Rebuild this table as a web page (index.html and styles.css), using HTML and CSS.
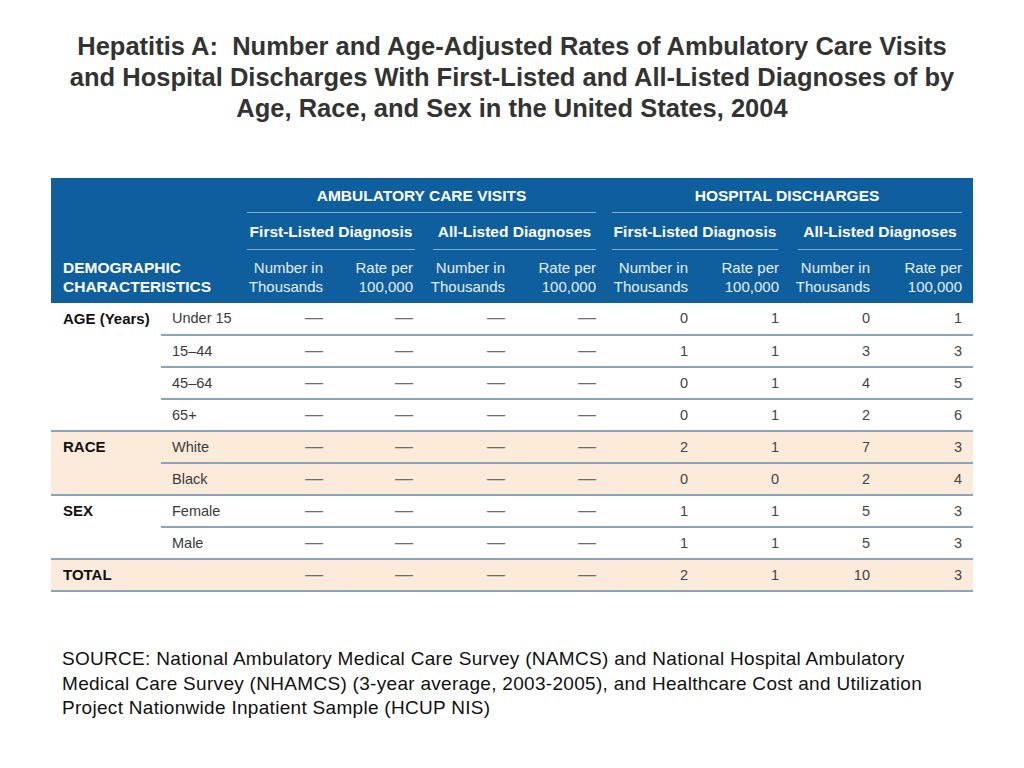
FILE: index.html
```html
<!DOCTYPE html>
<html lang="en">
<head>
<meta charset="utf-8">
<title>Hepatitis A</title>
<link rel="stylesheet" href="styles.css">
</head>
<body>
<h1 class="title">Hepatitis A:&nbsp; Number and Age-Adjusted Rates of Ambulatory Care Visits<br>and Hospital Discharges With First-Listed and All-Listed Diagnoses of by<br>Age, Race, and Sex in the United States, 2004</h1>

<table class="data">
  <colgroup>
    <col class="w110"><col class="w84"><col class="w80"><col class="w90"><col class="w92"><col class="w91"><col class="w92"><col class="w91"><col class="w91"><col class="w101">
  </colgroup>
  <thead>
    <tr class="h-group">
      <th colspan="2" rowspan="2" class="blank"></th>
      <th colspan="4" class="grp grp-a"><div class="rule">AMBULATORY CARE VISITS</div></th>
      <th colspan="4" class="grp grp-h"><div class="rule">HOSPITAL DISCHARGES</div></th>
    </tr>
    <tr class="h-sub">
      <th colspan="2" class="sub"><div class="rule s1">First-Listed Diagnosis</div></th>
      <th colspan="2" class="sub"><div class="rule s2">All-Listed Diagnoses</div></th>
      <th colspan="2" class="sub"><div class="rule s3">First-Listed Diagnosis</div></th>
      <th colspan="2" class="sub"><div class="rule s4">All-Listed Diagnoses</div></th>
    </tr>
    <tr class="h-cols">
      <th colspan="2" class="demo">DEMOGRAPHIC<br>CHARACTERISTICS</th>
      <th class="col">Number in<br>Thousands</th>
      <th class="col">Rate per<br>100,000</th>
      <th class="col">Number in<br>Thousands</th>
      <th class="col">Rate per<br>100,000</th>
      <th class="col">Number in<br>Thousands</th>
      <th class="col">Rate per<br>100,000</th>
      <th class="col">Number in<br>Thousands</th>
      <th class="col last">Rate per<br>100,000</th>
    </tr>
  </thead>
  <tbody>
    <tr class="first">
      <th rowspan="4" class="cat">AGE (Years)</th>
      <td class="lbl">Under 15</td>
      <td><span class="dash">—</span></td><td><span class="dash">—</span></td><td><span class="dash">—</span></td><td><span class="dash">—</span></td>
      <td>0</td><td>1</td><td>0</td><td class="last">1</td>
    </tr>
    <tr>
      <td class="lbl">15–44</td>
      <td><span class="dash">—</span></td><td><span class="dash">—</span></td><td><span class="dash">—</span></td><td><span class="dash">—</span></td>
      <td>1</td><td>1</td><td>3</td><td class="last">3</td>
    </tr>
    <tr>
      <td class="lbl">45–64</td>
      <td><span class="dash">—</span></td><td><span class="dash">—</span></td><td><span class="dash">—</span></td><td><span class="dash">—</span></td>
      <td>0</td><td>1</td><td>4</td><td class="last">5</td>
    </tr>
    <tr>
      <td class="lbl">65+</td>
      <td><span class="dash">—</span></td><td><span class="dash">—</span></td><td><span class="dash">—</span></td><td><span class="dash">—</span></td>
      <td>0</td><td>1</td><td>2</td><td class="last">6</td>
    </tr>
    <tr class="tint">
      <th rowspan="2" class="cat">RACE</th>
      <td class="lbl">White</td>
      <td><span class="dash">—</span></td><td><span class="dash">—</span></td><td><span class="dash">—</span></td><td><span class="dash">—</span></td>
      <td>2</td><td>1</td><td>7</td><td class="last">3</td>
    </tr>
    <tr class="tint">
      <td class="lbl">Black</td>
      <td><span class="dash">—</span></td><td><span class="dash">—</span></td><td><span class="dash">—</span></td><td><span class="dash">—</span></td>
      <td>0</td><td>0</td><td>2</td><td class="last">4</td>
    </tr>
    <tr>
      <th rowspan="2" class="cat">SEX</th>
      <td class="lbl">Female</td>
      <td><span class="dash">—</span></td><td><span class="dash">—</span></td><td><span class="dash">—</span></td><td><span class="dash">—</span></td>
      <td>1</td><td>1</td><td>5</td><td class="last">3</td>
    </tr>
    <tr>
      <td class="lbl">Male</td>
      <td><span class="dash">—</span></td><td><span class="dash">—</span></td><td><span class="dash">—</span></td><td><span class="dash">—</span></td>
      <td>1</td><td>1</td><td>5</td><td class="last">3</td>
    </tr>
    <tr class="tint">
      <th colspan="2" class="cat">TOTAL</th>
      <td><span class="dash">—</span></td><td><span class="dash">—</span></td><td><span class="dash">—</span></td><td><span class="dash">—</span></td>
      <td>2</td><td>1</td><td>10</td><td class="last">3</td>
    </tr>
  </tbody>
</table>

<p class="source">SOURCE: National Ambulatory Medical Care Survey (NAMCS) and National Hospital Ambulatory<br>Medical Care Survey (NHAMCS) (3-year average, 2003-2005), and Healthcare Cost and Utilization<br>Project Nationwide Inpatient Sample (HCUP NIS)</p>
</body>
</html>
```

FILE: styles.css
```css
html, body {
  margin: 0;
  padding: 0;
  background: #ffffff;
}

body {
  width: 1024px;
  font-family: "Liberation Sans", Arial, sans-serif;
  color: #222;
}

.title {
  margin: 31px 0 0 0;
  font-size: 25.5px;
  line-height: 31px;
  font-weight: bold;
  text-align: center;
  color: #333333;
}

.data {
  margin: 54px 0 0 51px;
  width: 922px;
  border-collapse: collapse;
  table-layout: fixed;
  font-family: "Liberation Sans", Arial, sans-serif;
}

.w110 { width: 110px; }
.w84 { width: 84px; }
.w80 { width: 80px; }
.w90 { width: 90px; }
.w92 { width: 92px; }
.w91 { width: 91px; }
.w101 { width: 101px; }

.data thead th {
  background: #0f5f9f;
  color: #ffffff;
  white-space: nowrap;
}

.data thead th.blank {
  padding: 0;
}

.data thead th.grp {
  padding: 8px 0 0 0;
  font-size: 15.5px;
  font-weight: bold;
  text-align: center;
}

.rule {
  border-bottom: 1px solid #86acd2;
  line-height: 20px;
}

.h-group .rule {
  padding-bottom: 6px;
}

.grp-a .rule { margin: 0 2px 0 2px; }
.grp-h .rule { margin: 0 11px 0 14px; }

.data thead th.sub {
  padding: 9px 0 0 0;
  font-size: 15.5px;
  font-weight: bold;
  text-align: center;
}

.h-sub .rule {
  padding-bottom: 7px;
}

.s1 { margin: 0 0 0 2px; }
.s2 { margin: 0 2px 0 18px; }
.s3 { margin: 0 3px 0 14px; }
.s4 { margin: 0 11px 0 17px; }

.data thead th.col {
  padding: 8px 2px 7px 0;
  font-size: 15px;
  line-height: 19px;
  font-weight: normal;
  text-align: right;
  color: #e6eef7;
}

.data thead th.demo {
  padding: 8px 0 7px 12px;
  text-align: left;
  font-size: 15.5px;
  line-height: 19px;
  font-weight: bold;
  color: #ffffff;
}

.data thead th.last {
  padding-right: 11px;
}

.data tbody td,
.data tbody th {
  height: 30px;
  padding: 0 2px 0 0;
  border-bottom: 2px solid #88a4c4;
  font-size: 14.5px;
  line-height: 30px;
  text-align: right;
  color: #444444;
  vertical-align: middle;
}

.data tbody tr.first td,
.data tbody tr.first th {
  height: 31px;
  line-height: 31px;
}

.data tbody th.cat {
  padding-left: 12px;
  text-align: left;
  vertical-align: top;
  font-size: 15px;
  font-weight: bold;
  color: #111111;
}

.data tbody td.lbl {
  padding-left: 11px;
  text-align: left;
  color: #3a3a3a;
}

.data tbody td.last {
  padding-right: 11px;
}

.data tbody tr.tint td,
.data tbody tr.tint th {
  background: #fcebdb;
}

.dash {
  font-size: 18px;
  line-height: 1;
  color: #6e6e6e;
}

.source {
  margin: 55px 0 0 0;
  padding-left: 62px;
  font-size: 19px;
  letter-spacing: 0.3px;
  line-height: 24.5px;
  color: #111111;
}
```
